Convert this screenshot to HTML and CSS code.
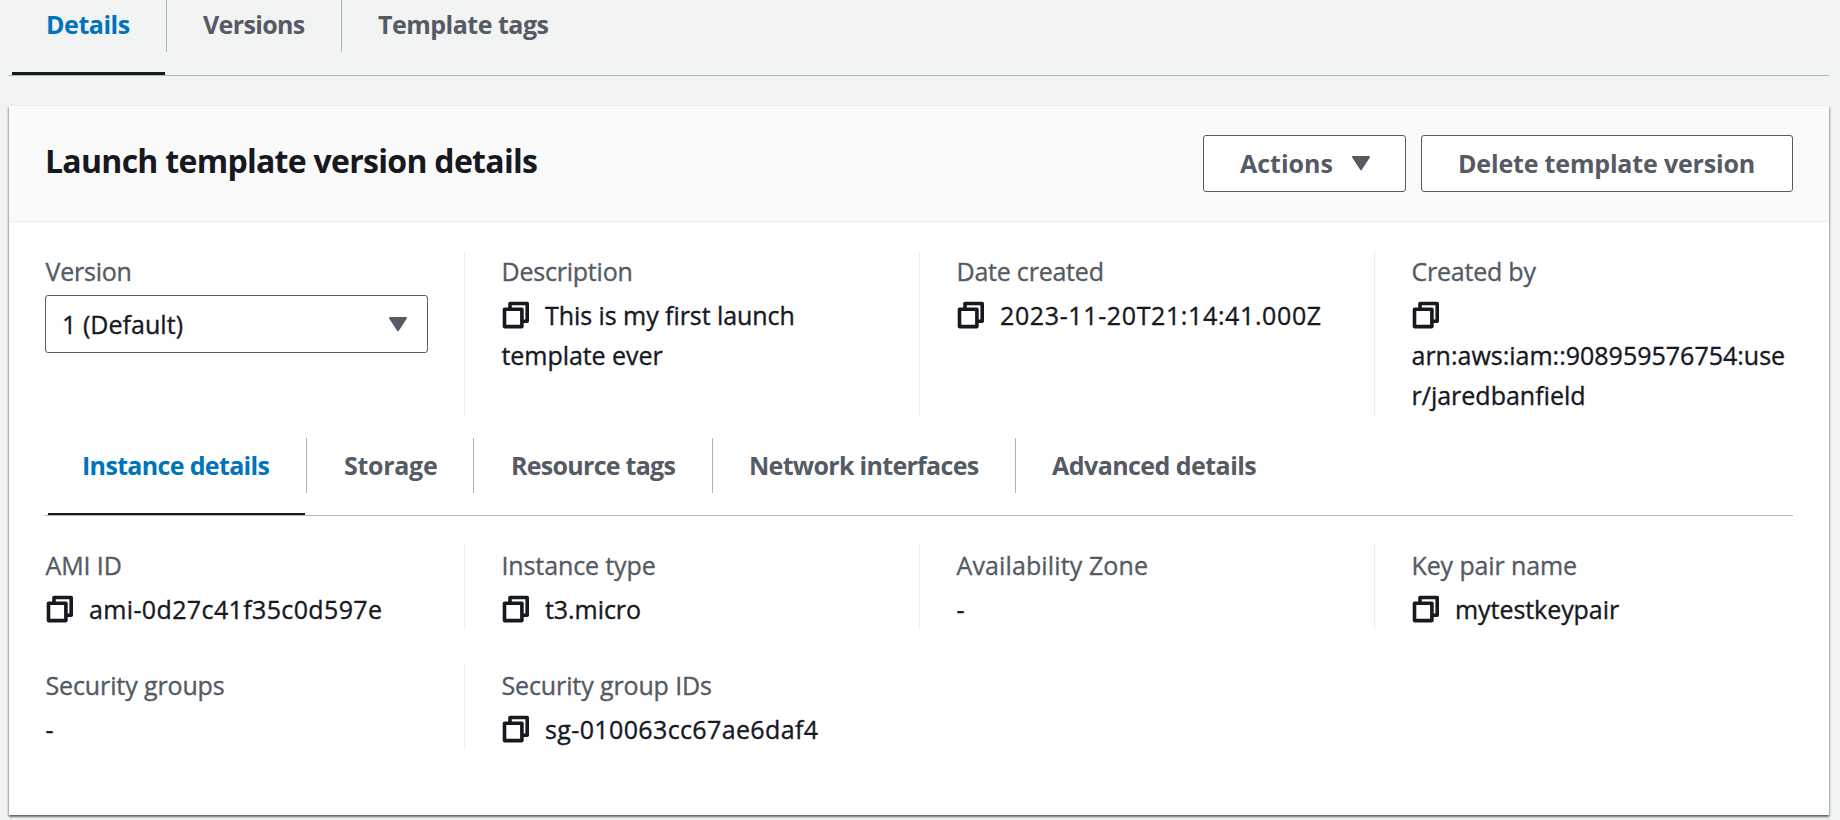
FILE: index.html
```
<!DOCTYPE html>
<html lang="en">
<head>
<meta charset="utf-8">
<title>Launch template version details</title>
<link rel="stylesheet" href="styles.css">
</head>
<body>
<svg class="defs" aria-hidden="true">
  <symbol id="copy" viewBox="0 0 28 28">
    <path d="M8 7.5V2.5H25.2V20.3H21.5" fill="none" stroke="currentColor" stroke-width="3.6" stroke-linejoin="round" stroke-linecap="square"/>
    <rect x="2.5" y="8.2" width="17.4" height="17.4" fill="none" stroke="currentColor" stroke-width="3.6" stroke-linejoin="round"/>
  </symbol>
  <symbol id="caret" viewBox="0 0 20 16">
    <path d="M2 2H18L10 14.2Z" fill="currentColor" stroke="currentColor" stroke-width="2" stroke-linejoin="round"/>
  </symbol>
</svg>

<nav class="tabs tabs-page">
  <a class="tab active t-details"><span>Details</span></a>
  <a class="tab t-versions"><span>Versions</span></a>
  <a class="tab t-tags"><span>Template tags</span></a>
</nav>

<main class="panel">
  <header class="panel-head">
    <h1>Launch template version details</h1>
    <div class="buttons">
      <button class="btn btn-actions">Actions<svg class="caret"><use href="#caret"/></svg></button>
      <button class="btn btn-delete">Delete template version</button>
    </div>
  </header>

  <div class="panel-body">
    <section class="fields">
      <div class="field">
        <div class="label">Version</div>
        <div class="select"><span>1 (Default)</span><svg class="caret"><use href="#caret"/></svg></div>
      </div>
      <div class="field">
        <div class="label">Description</div>
        <div class="value"><svg class="copy"><use href="#copy"/></svg>This is my first launch template ever</div>
      </div>
      <div class="field">
        <div class="label">Date created</div>
        <div class="value date"><svg class="copy"><use href="#copy"/></svg>2023-11-20T21:14:41.000Z</div>
      </div>
      <div class="field">
        <div class="label">Created by</div>
        <div class="value arn"><svg class="copy"><use href="#copy"/></svg> arn:aws:iam::908959576754:user/jaredbanfield</div>
      </div>
    </section>

    <nav class="tabs tabs-inner">
      <a class="tab active t-instance"><span>Instance details</span></a>
      <a class="tab t-storage"><span>Storage</span></a>
      <a class="tab t-resource"><span>Resource tags</span></a>
      <a class="tab t-network"><span>Network interfaces</span></a>
      <a class="tab t-advanced"><span>Advanced details</span></a>
    </nav>

    <section class="fields">
      <div class="field">
        <div class="label">AMI ID</div>
        <div class="value id"><svg class="copy"><use href="#copy"/></svg>ami-0d27c41f35c0d597e</div>
      </div>
      <div class="field">
        <div class="label">Instance type</div>
        <div class="value"><svg class="copy"><use href="#copy"/></svg>t3.micro</div>
      </div>
      <div class="field">
        <div class="label wide">Availability Zone</div>
        <div class="value">-</div>
      </div>
      <div class="field">
        <div class="label">Key pair name</div>
        <div class="value"><svg class="copy"><use href="#copy"/></svg>mytestkeypair</div>
      </div>
      <div class="field">
        <div class="label">Security groups</div>
        <div class="value">-</div>
      </div>
      <div class="field">
        <div class="label">Security group IDs</div>
        <div class="value id"><svg class="copy"><use href="#copy"/></svg>sg-010063cc67ae6daf4</div>
      </div>
    </section>
  </div>
</main>
</body>
</html>
```
FILE: styles.css
```
* { box-sizing: border-box; }

body {
  margin: 0;
  height: 820px;
  overflow: hidden;
  padding: 0 11px 0 9px;
  background: #f2f3f3;
  color: #16191f;
  font: 400 25px/40px "Open Sans", "Noto Sans", sans-serif;
}

.defs { position: absolute; width: 0; height: 0; }

/* Tabs */
.tabs {
  display: flex;
  border-bottom: 1px solid #aab7b8;
}
.tab {
  display: block;
  color: #545b64;
  font-weight: 700;
  letter-spacing: -0.5px;
  white-space: nowrap;
  border-bottom: 3px solid transparent;
}
.tab span {
  display: block;
  padding-left: 37px;
}
.tab + .tab span { border-left: 1px solid #aab7b8; padding-left: 36px; }
.tab.active { color: #0073bb; border-bottom-color: #16191f; }

.tabs-page { height: 76px; padding-left: 3px; }
.tabs-page .tab { height: 75px; }
.tabs-page .tab span { height: 52px; padding-top: 4px; }
.t-details { width: 153px; margin-right: 1px; letter-spacing: -0.45px; }
.tabs-page .t-details span { padding-left: 34px; }
.t-versions { width: 175px; letter-spacing: -0.65px; }
.t-tags { width: 240px; }

.tabs-inner { height: 78px; margin-top: 23px; padding-left: 3px; }
.tabs-inner .tab { height: 77px; border-bottom-width: 2px; }
.tabs-inner .tab span { height: 55px; padding-top: 7px; }
.t-instance { width: 257px; margin-right: 1px; letter-spacing: -0.66px; }
.tabs-inner .t-instance span { padding-left: 34px; }
.t-storage { width: 167px; letter-spacing: -0.3px; }
.tabs-inner .t-storage span,
.tabs-inner .t-resource span { padding-left: 37px; }
.t-resource { width: 239px; letter-spacing: -0.72px; }
.t-network { width: 303px; letter-spacing: -0.7px; }
.t-advanced { width: 280px; letter-spacing: -0.55px; }

/* Panel */
.panel {
  height: 709px;
  margin-top: 30px;
  background: #fff;
  box-shadow: 0 2px 2px 0 rgba(0, 28, 36, 0.5), 1px 1px 2px 0 rgba(0, 28, 36, 0.2), -1px 1px 2px 0 rgba(0, 28, 36, 0.2);
}
.panel-head {
  display: flex;
  justify-content: space-between;
  height: 116px;
  padding: 29px 36px 0;
  background: #fafafa;
  border-bottom: 1px solid #eaeded;
}
h1 {
  margin: 6px 0 0;
  font-size: 32px;
  line-height: 40px;
  font-weight: 700;
  letter-spacing: -0.71px;
}
.panel-body { padding: 30px 36px 0; }

.buttons { display: flex; gap: 15px; }
.btn {
  display: flex;
  align-items: center;
  height: 57px;
  padding: 0 0 2px 36px;
  background: #fff;
  border: 1px solid #545b64;
  border-radius: 3px;
  color: #545b64;
  font: inherit;
  font-weight: 700;
  white-space: nowrap;
}
.btn-actions { width: 203px; letter-spacing: 0; }
.btn-delete { width: 372px; letter-spacing: -0.17px; }
.btn-actions .caret { margin: 0 0 0 18px; }
.caret { display: block; width: 20px; height: 16px; color: #545b64; }

/* Field columns */
.fields {
  display: grid;
  grid-template-columns: 419px 455px 455px minmax(0, 1fr);
  row-gap: 36px;
  -webkit-text-stroke: 0.35px currentColor;
}
.field { padding-right: 36px; }
.field:not(:nth-child(4n + 1)) {
  border-left: 1px solid #eaeded;
  padding-left: 36px;
}
.field:nth-child(4n) { padding-right: 0; }
.label {
  color: #545b64;
  line-height: 38px;
  margin-bottom: 5px;
  padding-left: 0.5px;
  letter-spacing: -0.22px;
}
.label.wide { letter-spacing: 0.12px; }
.tabs-inner + .fields { margin-top: 29px; }
.tabs-inner + .fields .label { line-height: 40px; margin-bottom: 4px; letter-spacing: -0.12px; }
.tabs-inner + .fields .label.wide { letter-spacing: 0.12px; }
.value { overflow-wrap: break-word; letter-spacing: -0.06px; padding-left: 0.5px; }
.value.date { letter-spacing: 0.62px; white-space: nowrap; }
.value.id { letter-spacing: 0.37px; white-space: nowrap; }
.value.arn { letter-spacing: 0; padding-right: 6px; }
.copy {
  display: inline-block;
  width: 28px;
  height: 28px;
  margin: 0 15px 0 0.5px;
  vertical-align: -4px;
}
.select {
  display: flex;
  align-items: center;
  justify-content: space-between;
  width: 383px;
  height: 58px;
  padding: 0 19px 0 16px;
  border: 1px solid #545b64;
  border-radius: 3px;
  letter-spacing: 0.05px;
}
```
